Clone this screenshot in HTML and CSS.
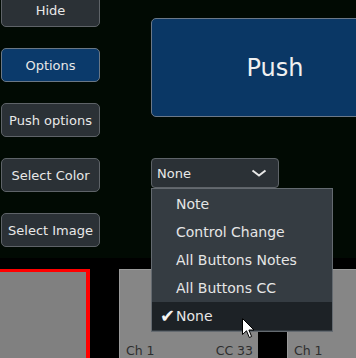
FILE: index.html
```html
<!DOCTYPE html>
<html>
<head>
<meta charset="utf-8">
<link rel="stylesheet" href="styles.css">
</head>
<body>
<div class="top">
  <div class="sidebar">
    <button class="btn">Hide</button>
    <button class="btn active">Options</button>
    <button class="btn">Push options</button>
    <button class="btn">Select Color</button>
    <button class="btn">Select Image</button>
  </div>
  <div class="main">
    <button class="push">Push</button>
    <div class="select-wrap">
      <div class="select">
        <span>None</span>
        <svg class="chev" width="16" height="8" viewBox="0 0 16 8"><path d="M1.5 1.5 L8 6.5 L14.5 1.5" fill="none" stroke="#e8e8e8" stroke-width="2"/></svg>
      </div>
      <ul class="menu">
        <li>Note</li>
        <li>Control Change</li>
        <li>All Buttons Notes</li>
        <li>All Buttons CC</li>
        <li class="checked"><span class="check">✔</span>None</li>
      </ul>
    </div>
  </div>
</div>
<div class="bottom">
  <div class="panel selected"></div>
  <div class="panel"><div class="labels"><span>Ch 1</span><span>CC 33</span></div></div>
  <div class="panel"><div class="labels"><span>Ch 1</span></div></div>
</div>
<svg class="cursor" width="13" height="21" viewBox="0 0 13 21"><path d="M0.5 0.5 L0.5 16.5 L4.5 12.8 L7.3 19.5 L9.6 18.5 L6.9 12 L12 12 Z" fill="#fff" stroke="#000" stroke-width="1"/></svg>
</body>
</html>
```
FILE: styles.css
```css
html, body {
  margin: 0;
  padding: 0;
  background: #000;
  overflow: hidden;
  width: 356px;
  height: 358px;
  font-family: "DejaVu Sans", sans-serif;
  position: relative;
}
.top {
  height: 258px;
  background: #010a03;
  display: flex;
  position: relative;
  z-index: 2;
}
.sidebar {
  display: flex;
  flex-direction: column;
  gap: 21px;
  margin-top: -7px;
  margin-left: 1px;
  width: 99px;
  flex: none;
}
.btn {
  box-sizing: border-box;
  width: 99px;
  height: 34px;
  background: #2b3136;
  border: 1px solid #5e6368;
  border-radius: 5px;
  color: #e8e8e8;
  font-family: "DejaVu Sans", sans-serif;
  font-size: 13px;
  padding: 0;
}
.btn.active {
  background: #0b3a6b;
  border-color: #6a7785;
}
.main {
  margin-left: 51px;
  display: flex;
  flex-direction: column;
  flex: none;
}
.push {
  box-sizing: border-box;
  margin-top: 18px;
  width: 248px;
  height: 99px;
  background: #0a3765;
  border: 1px solid #6b7888;
  border-radius: 5px;
  color: #f0f0f0;
  font-family: "DejaVu Sans", sans-serif;
  font-size: 24px;
  padding: 0;
}
.select-wrap {
  margin-top: 41px;
  position: relative;
}
.select {
  box-sizing: border-box;
  width: 128px;
  height: 30px;
  background: #2b3136;
  border: 1px solid #5e6368;
  border-radius: 4px;
  color: #e8e8e8;
  font-size: 13px;
  display: flex;
  align-items: center;
  justify-content: space-between;
  padding: 0 11px 0 5px;
}
.chev {
  display: block;
}
.menu {
  position: absolute;
  left: 0;
  top: 30px;
  box-sizing: border-box;
  width: 182px;
  margin: 0;
  padding: 1px 0;
  list-style: none;
  background: #353c42;
  border: 1px solid #646a70;
  z-index: 5;
}
.menu li {
  height: 28px;
  display: flex;
  align-items: center;
  padding-left: 24px;
  color: #e6e6e6;
  font-size: 14px;
  position: relative;
}
.menu li.checked {
  background: #1d2226;
}
.check {
  position: absolute;
  left: 8px;
  top: 4px;
  font-size: 18px;
  line-height: 20px;
  color: #f4f4f4;
}
.bottom {
  display: flex;
  gap: 29px;
  margin-left: -49px;
  padding-top: 11px;
  position: relative;
  z-index: 1;
}
.panel {
  box-sizing: border-box;
  flex: none;
  width: 139px;
  height: 89px;
  background: #868686;
  border: 1px solid #9a9a9a;
  border-right: none;
  border-bottom: none;
}
.panel.selected {
  background: #808080;
  border: 3px solid #ff0000;
  border-right-width: 4px;
  border-bottom: none;
}
.labels {
  display: flex;
  justify-content: space-between;
  margin-top: 73px;
  padding: 0 5px 0 6px;
  font-size: 12.5px;
  line-height: 15px;
  color: #2e2e2e;
}
.cursor {
  position: absolute;
  left: 242px;
  top: 318px;
  z-index: 10;
}
```
